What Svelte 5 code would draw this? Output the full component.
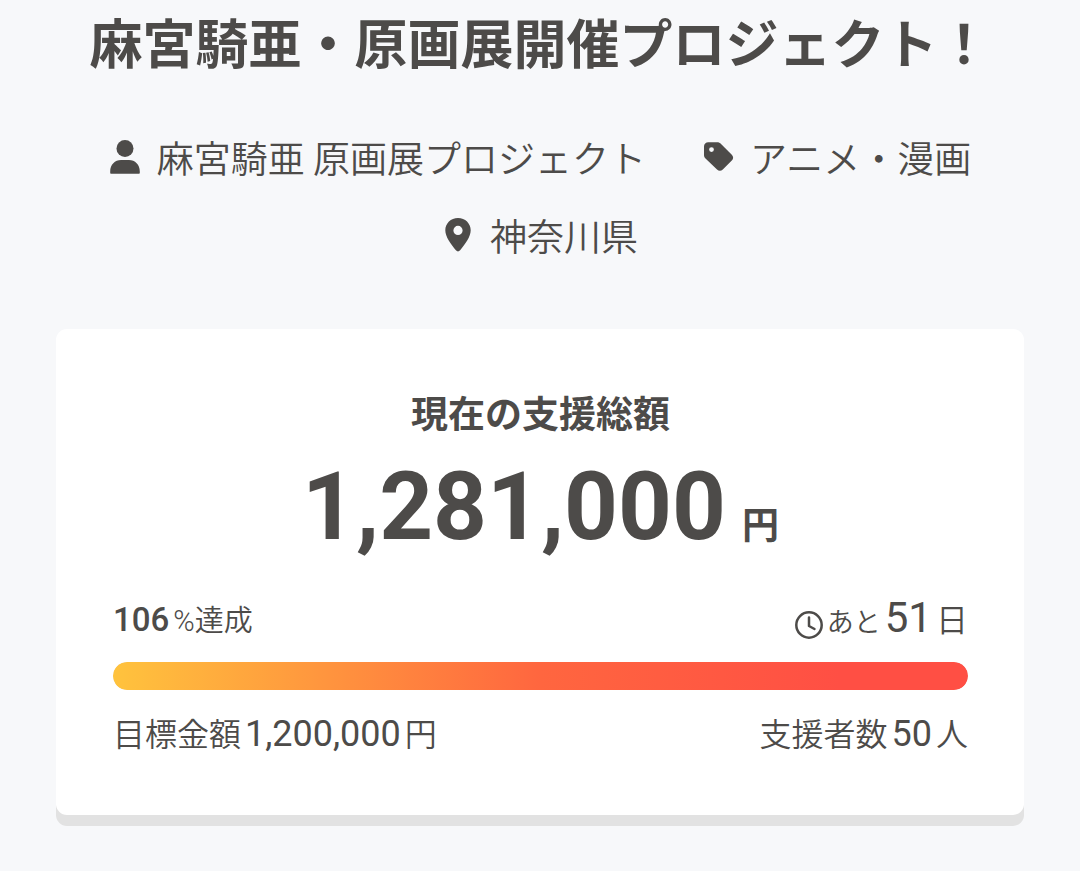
<script lang="ts">
  let project = $state({
    title: '麻宮騎亜・原画展開催プロジェクト！',
    owner: '麻宮騎亜 原画展プロジェクト',
    category: 'アニメ・漫画',
    area: '神奈川県',
    total: 1281000,
    goal: 1200000,
    supporters: 50,
    daysLeft: 51,
  });

  let percent = $derived(Math.floor((project.total / project.goal) * 100));
  let barWidth = $derived(Math.min(percent, 100));

  const format = (n: number) => n.toLocaleString('en-US');
</script>

<main class="project">
  <h1 class="title">{project.title}</h1>

  <ul class="meta">
    <li class="meta-item">
      <svg class="meta-icon" viewBox="0 0 32 36" aria-hidden="true">
        <circle cx="16" cy="9.5" r="8.5" />
        <path d="M1.200 32.500C1.200 25.500 6 21 12 21h8c6 0 10.800 4.500 10.800 11.500v1.200c0 .8-.4 1.100-1.100 1.100H2.300c-.7 0-1.100-.3-1.100-1.100z" />
      </svg>
      <span>{project.owner}</span>
    </li>
    <li class="meta-item">
      <svg class="meta-icon" viewBox="0 0 32 36" aria-hidden="true">
        <path fill-rule="evenodd" d="M2 7.500c0-2.500 1.800-4.300 4.300-4.300h9c1.400 0 2.500.5 3.500 1.500l11 11c1.800 1.800 1.800 4 0 5.800l-9 9c-1.800 1.800-4 1.800-5.800 0l-11.500-11c-1-1-1.500-2.100-1.500-3.500zM9.500 8.200a2.400 2.400 0 1 0 0 4.800 2.400 2.400 0 0 0 0-4.800z" />
      </svg>
      <span>{project.category}</span>
    </li>
    <li class="meta-item">
      <svg class="meta-icon" viewBox="0 0 32 36" aria-hidden="true">
        <path fill-rule="evenodd" d="M16 1C8.800 1 3.300 6.500 3.300 13.300c0 6.700 5.700 14 10.600 20 1.200 1.500 3 1.500 4.200 0 4.900-6 10.600-13.300 10.600-20C28.700 6.500 23.200 1 16 1zm0 7.800a4.600 4.600 0 1 1 0 9.200 4.600 4.600 0 0 1 0-9.200z" />
      </svg>
      <span>{project.area}</span>
    </li>
  </ul>

  <section class="card">
    <h2 class="card-title">現在の支援総額</h2>
    <p class="total"><span class="total-num">{format(project.total)}</span><span class="total-unit">円</span></p>

    <div class="row status">
      <p class="rate"><strong>{percent}</strong>%達成</p>
      <p class="remain">
        <svg class="clock" viewBox="0 0 28 28" aria-hidden="true">
          <circle cx="14" cy="14" r="12.700" />
          <path d="M14 6.500v8.500l5.500 3" />
        </svg>
        <span class="remain-label">あと</span><span class="remain-num">{project.daysLeft}</span><span class="remain-unit">日</span>
      </p>
    </div>

    <div class="bar" role="progressbar" aria-label="達成率" aria-valuenow={barWidth} aria-valuemin="0" aria-valuemax="100">
      <div class="bar-fill" style="width: {barWidth}%"></div>
    </div>

    <div class="row">
      <p class="figure">目標金額<span class="num">{format(project.goal)}</span>円</p>
      <p class="figure">支援者数<span class="num">{project.supporters}</span>人</p>
    </div>
  </section>
</main>

<style>
  :global(body) { background: #f7f8fa; }
  .project {
    padding: 3px 56px 44px; color: #4d4b49;
    font-family: Roboto, "Noto Sans CJK JP", sans-serif; font-weight: 350;
  }
  h1, h2, p, ul { margin: 0; padding: 0; }
  .title, .meta, .card-title { font-family: "Noto Sans CJK JP", Roboto, sans-serif; }
  .title { font-size: 53px; line-height: 76px; font-weight: 700; text-align: center; white-space: nowrap; }

  .meta {
    display: flex; flex-wrap: wrap; justify-content: center; column-gap: 56px;
    margin-top: 39px; list-style: none; font-size: 37px; line-height: 78px;
  }
  .meta-item { display: flex; align-items: center; gap: 16px; }
  .meta-icon { width: 32px; height: 36px; flex-shrink: 0; fill: currentColor; }

  .card {
    margin-top: 55px; padding: 57px 56px 52px 57px; background: #fff;
    border-radius: 11px; box-shadow: 0 11px 0 #e2e2e2;
  }
  .card-title { font-size: 37px; line-height: 52px; font-weight: 700; text-align: center; }
  .total {
    display: flex; justify-content: center; align-items: baseline; gap: 16px;
    font-weight: 700; line-height: 110px; margin-top: 14px;
  }
  .total-num { font-size: 94px; }
  .total-unit { font-size: 37px; }

  .row { display: flex; justify-content: space-between; align-items: center; }
  .status { line-height: 56px; margin-top: 8px; }
  .rate { font-size: 29px; }
  .rate strong { font-size: 33px; font-weight: 500; margin-right: 4px; }
  .remain { display: flex; align-items: baseline; gap: 4px; }
  .clock {
    width: 28px; height: 28px; align-self: center; margin-top: 8px; fill: none;
    stroke: currentColor; stroke-width: 2.500; stroke-linecap: round; stroke-linejoin: round;
  }
  .remain-label { font-size: 27px; }
  .remain-num { font-size: 42px; font-weight: 400; }
  .remain-unit { font-size: 32px; }

  .bar { height: 28px; margin: 11px 0 16px; border-radius: 14px; background: #eee; overflow: hidden; }
  .bar-fill {
    height: 100%; border-radius: 14px;
    background: linear-gradient(90deg, #ffc33d, #ff663f 50%, #ff4f44 85%);
  }

  .figure { font-size: 32px; line-height: 56px; }
  .num { font-size: 36px; font-weight: 400; margin: 0 4px; }
</style>
